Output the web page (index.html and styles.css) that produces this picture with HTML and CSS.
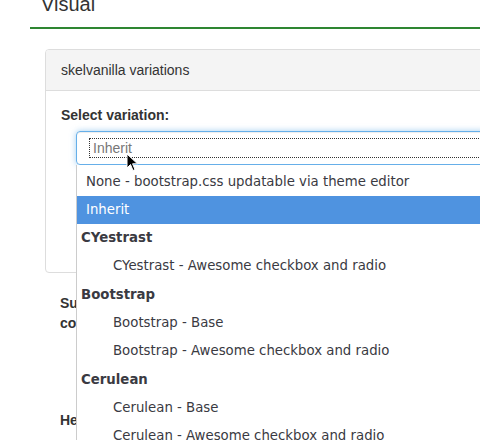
FILE: index.html
```html
<!DOCTYPE html>
<html>
<head>
<meta charset="utf-8">
<link rel="stylesheet" href="styles.css">
</head>
<body>
<div class="page">
  <h3 class="section-title">Visual</h3>
  <div class="panel">
    <div class="panel-heading">skelvanilla variations</div>
    <div class="panel-body">
      <label class="field-label">Select variation:</label>
      <div class="select-wrap">
        <div class="select">
          <span class="select-focus">Inherit</span>
        </div>
        <ul class="dropdown">
          <li class="opt">None - bootstrap.css updatable via theme editor</li>
          <li class="opt selected">Inherit</li>
          <li class="group">CYestrast</li>
          <li class="opt sub">CYestrast - Awesome checkbox and radio</li>
          <li class="group">Bootstrap</li>
          <li class="opt sub">Bootstrap - Base</li>
          <li class="opt sub">Bootstrap - Awesome checkbox and radio</li>
          <li class="group">Cerulean</li>
          <li class="opt sub">Cerulean - Base</li>
          <li class="opt sub">Cerulean - Awesome checkbox and radio</li>
        </ul>
        <svg class="cursor" width="14" height="20" viewBox="0 0 14 20"><path d="M1 1 L1 15 L4.5 11.5 L7 17.5 L9 16.6 L6.6 10.8 L11.5 10.8 Z" fill="#000" stroke="#fff" stroke-width="1"/></svg>
      </div>
    </div>
  </div>
  <div class="form-row">
    <label class="row-label">Submit colour</label>
  </div>
  <div class="form-row last">
    <label class="row-label">Header</label>
  </div>
</div>
</body>
</html>
```

FILE: styles.css
```css
html, body {
  margin: 0;
  padding: 0;
  background: #fff;
  overflow: hidden;
}
body {
  width: 480px;
  height: 440px;
  font-family: "Liberation Sans", Arial, sans-serif;
  font-size: 14px;
  line-height: 20px;
  color: #333;
}
.page {
  padding-left: 30px;
  margin-top: -7px;
  width: 600px;
}
.section-title {
  margin: 0;
  font-weight: normal;
  font-size: 20px;
  line-height: 22px;
  padding: 0 0 12px 11px;
  border-bottom: 2px solid #2e8631;
  color: #333;
}
.panel {
  margin: 20px 0 0 15px;
  border: 1px solid #ddd;
  border-radius: 4px;
  background: #fff;
}
.panel-heading {
  background: #f4f4f4;
  border-bottom: 1px solid #ddd;
  padding: 10px 15px;
  line-height: 20px;
  border-radius: 3px 3px 0 0;
}
.panel-body {
  padding: 14px 15px 0 15px;
  height: 167px;
}
.field-label {
  display: block;
  font-weight: bold;
  margin-bottom: 6px;
}
.select-wrap {
  position: relative;
  margin-left: 15px;
}
.select {
  border: 1px solid #66afe9;
  border-radius: 4px;
  box-shadow: inset 0 1px 1px rgba(0,0,0,.075), 0 0 6px rgba(102,175,233,.6);
  padding: 6px 0 0 12px;
  box-sizing: content-box;
  height: 26px;
}
.select-focus {
  display: block;
  border: 1px dotted #333;
  height: 18px;
  line-height: 18px;
  padding-left: 3px;
  color: #777;
}
.dropdown {
  position: absolute;
  left: 0;
  top: 34px;
  width: 420px;
  margin: 0;
  padding: 2.5px 0 0 0;
  list-style: none;
  background: #fff;
  border-left: 1px solid #ccc;
  font-family: "DejaVu Sans", sans-serif;
  font-size: 13.3px;
  color: #3a3a42;
  z-index: 5;
}
.dropdown li {
  height: 28.3px;
  line-height: 28.3px;
  white-space: nowrap;
}
.opt {
  padding-left: 9px;
}
.opt.sub {
  padding-left: 36px;
}
.group {
  padding-left: 4px;
  font-weight: bold;
}
.selected {
  background: #4f93e0;
  color: #fff;
}
.cursor {
  position: absolute;
  left: 50px;
  top: 22px;
  z-index: 6;
}
.form-row {
  padding: 20px 0 0 30px;
  height: 117px;
}
.form-row.last {
  padding-top: 0;
}
.row-label {
  display: block;
  width: 90px;
  font-weight: bold;
}
```
